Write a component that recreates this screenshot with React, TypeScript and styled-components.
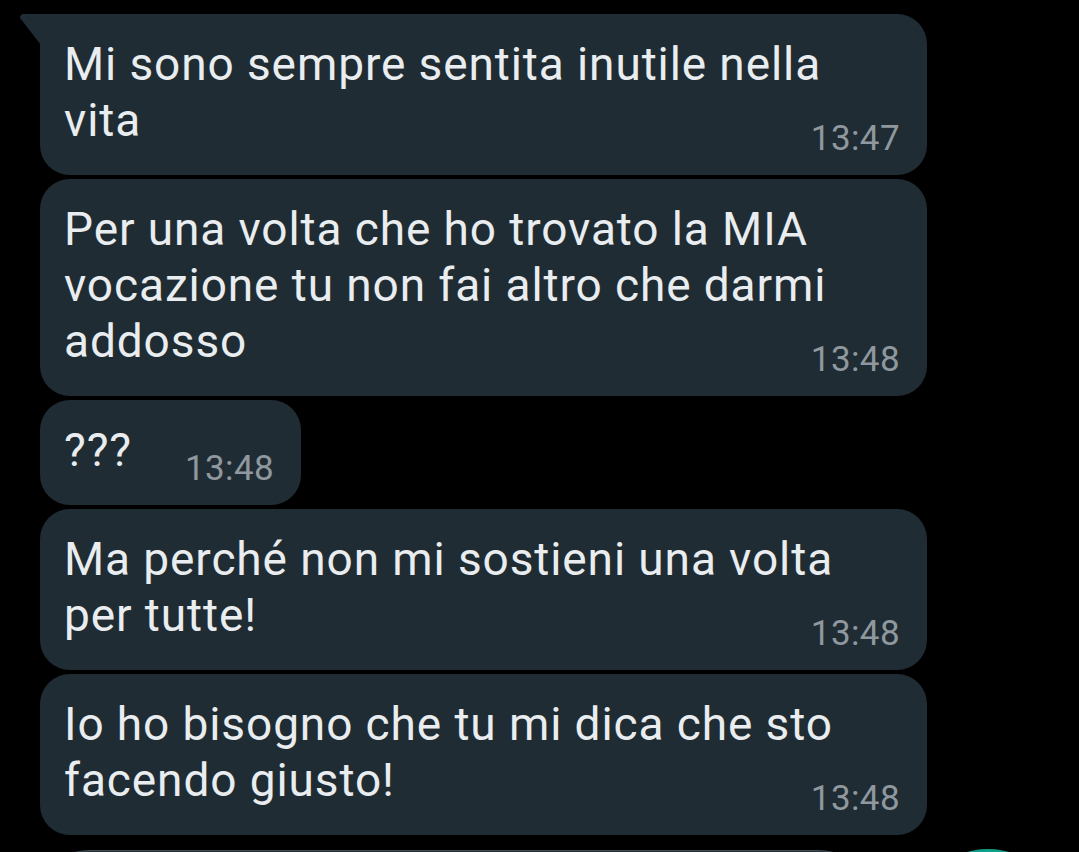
import React from "react";
import styled, { createGlobalStyle } from "styled-components";

const Global = createGlobalStyle`
  html, body { margin: 0; padding: 0; background: #000; overflow: hidden; }
  body { font-family: Roboto, "Noto Sans", "Liberation Sans", sans-serif; }
`;

const Page = styled.div`
  width: 1079px;
  height: 852px;
  box-sizing: border-box;
  padding: 14px 0 0 40px;
  display: flex;
  flex-direction: column;
  gap: 4px;
  background: #000;
  overflow: hidden;
`;

const Bubble = styled.div<{ $wide?: boolean; $tail?: boolean }>`
  position: relative;
  box-sizing: border-box;
  width: ${(p) => (p.$wide ? "887px" : "fit-content")};
  background: #202c33;
  border-radius: ${(p) => (p.$tail ? "0 30px 30px 30px" : "30px")};
  padding: 22px 27px 16px 24px;
  display: flex;
  flex-wrap: wrap;
  align-items: flex-end;
  ${(p) =>
    p.$tail &&
    `
    &::before {
      content: "";
      position: absolute;
      left: -20px;
      top: 0;
      width: 21px;
      height: 31px;
      background: #202c33;
      clip-path: polygon(2px 0, 100% 0, 100% 100%, 0 4px, 0 2px);
      border-top-left-radius: 3px;
    }
  `}
`;

const Text = styled.div<{ $wide?: boolean }>`
  font-size: 46px;
  letter-spacing: 0.9px;
  line-height: 56px;
  color: #e9edef;
  margin-bottom: 11px;
  ${(p) => (p.$wide ? "flex: 1 0 100%;" : "")}
`;

const Time = styled.span<{ $gap?: number }>`
  font-size: 35px;
  letter-spacing: 0.4px;
  line-height: 40px;
  color: #8f989e;
  margin-top: -40px;
  margin-left: ${(p) => (p.$gap !== undefined ? `${p.$gap}px` : "auto")};
  white-space: nowrap;
`;

const Footer = styled.div`
  display: flex;
  align-items: flex-start;
  margin-top: 10px;
  margin-left: -10px;
`;

const InputBar = styled.div`
  width: 848px;
  height: 120px;
  margin-top: 1px;
  border-radius: 60px;
  background: #26333a;
  border-top: 1px solid #3e4b51;
  box-sizing: border-box;
  flex: none;
`;

const MicButton = styled.div`
  width: 150px;
  height: 150px;
  border-radius: 50%;
  background: #0fa08a;
  margin-left: 35px;
  flex: none;
`;

type Msg = { lines: string[]; time: string; wide: boolean; tail?: boolean };

const messages: Msg[] = [
  { lines: ["Mi sono sempre sentita inutile nella", "vita"], time: "13:47", wide: true, tail: true },
  {
    lines: ["Per una volta che ho trovato la MIA", "vocazione tu non fai altro che darmi", "addosso"],
    time: "13:48",
    wide: true,
  },
  { lines: ["???"], time: "13:48", wide: false },
  { lines: ["Ma perché non mi sostieni una volta", "per tutte!"], time: "13:48", wide: true },
  { lines: ["Io ho bisogno che tu mi dica che sto", "facendo giusto!"], time: "13:48", wide: true },
];

export default function App() {
  return (
    <>
      <Global />
      <Page>
        {messages.map((m, i) => (
          <Bubble key={i} $wide={m.wide} $tail={m.tail}>
            <Text $wide={m.wide}>
              {m.lines.map((l, j) => (
                <React.Fragment key={j}>
                  {j > 0 && <br />}
                  {l}
                </React.Fragment>
              ))}
            </Text>
            <Time $gap={m.wide ? undefined : 53}>{m.time}</Time>
          </Bubble>
        ))}
        <Footer>
          <InputBar />
          <MicButton />
        </Footer>
      </Page>
    </>
  );
}
